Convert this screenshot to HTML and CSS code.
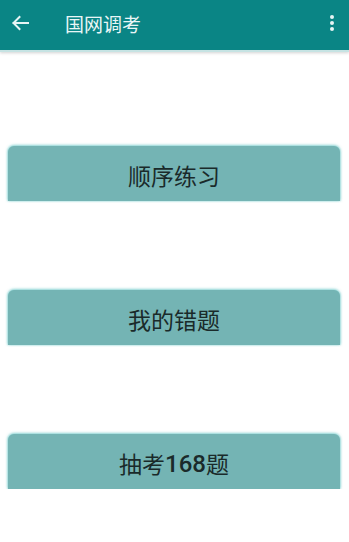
FILE: index.html
```html
<!DOCTYPE html>
<html lang="zh">
<head>
<meta charset="utf-8">
<link rel="stylesheet" href="styles.css">
</head>
<body>
<header class="bar">
  <svg class="back" width="18" height="16" viewBox="0 0 18 16"><path d="M17 8H2.5M8.5 2L2.5 8l6 6" fill="none" stroke="#e6f4f4" stroke-width="2" stroke-linecap="square"/></svg>
  <span class="title">国网调考</span>
  <span class="menu"><i></i><i></i><i></i></span>
</header>
<div class="bar-edge"></div>
<main class="list">
  <div class="btn">顺序练习</div>
  <div class="btn">我的错题</div>
  <div class="btn">抽考<span class="num">168</span>题</div>
</main>
</body>
</html>
```
FILE: styles.css
```css
html, body {
  margin: 0;
  padding: 0;
  background: #ffffff;
  font-family: "Noto Sans CJK SC", "Noto Sans", sans-serif;
}
.bar {
  height: 50px;
  background: #0a8585;
  display: flex;
  align-items: center;
  position: relative;
}
.back {
  margin-left: 11px;
  margin-top: -4px;
  flex: none;
}
.title {
  margin-left: 36px;
  color: #e9f6f6;
  font-size: 19px;
  line-height: 1;
  margin-top: -3px;
}
.menu {
  margin-left: auto;
  margin-right: 15px;
  display: flex;
  flex-direction: column;
  gap: 2px;
  margin-top: -4px;
}
.menu i {
  display: block;
  width: 4px;
  height: 4px;
  border-radius: 50%;
  background: #e6f4f4;
}
.bar-edge {
  height: 2px;
  background: #c6e3e3;
  box-shadow: 0 1px 3px rgba(0, 0, 0, 0.22);
}
.list {
  display: flex;
  flex-direction: column;
  gap: 89px;
  padding-top: 94px;
}
.btn {
  margin: 0 9px 0 8px;
  height: 55px;
  background: #74b4b4;
  border-radius: 6px 6px 0 0;
  box-shadow: 0 -1px 3px rgba(120, 205, 205, 0.7), 1px 0 2px rgba(120, 205, 205, 0.5), -1px 0 2px rgba(120, 205, 205, 0.5);
  display: flex;
  align-items: center;
  justify-content: center;
  color: #1a2a2a;
  font-size: 23px;
  line-height: 1;
  padding-top: 4px;
  box-sizing: border-box;
}
.num {
  font-family: "Roboto", "Noto Sans", sans-serif;
  font-weight: 500;
  font-size: 24px;
}
```
